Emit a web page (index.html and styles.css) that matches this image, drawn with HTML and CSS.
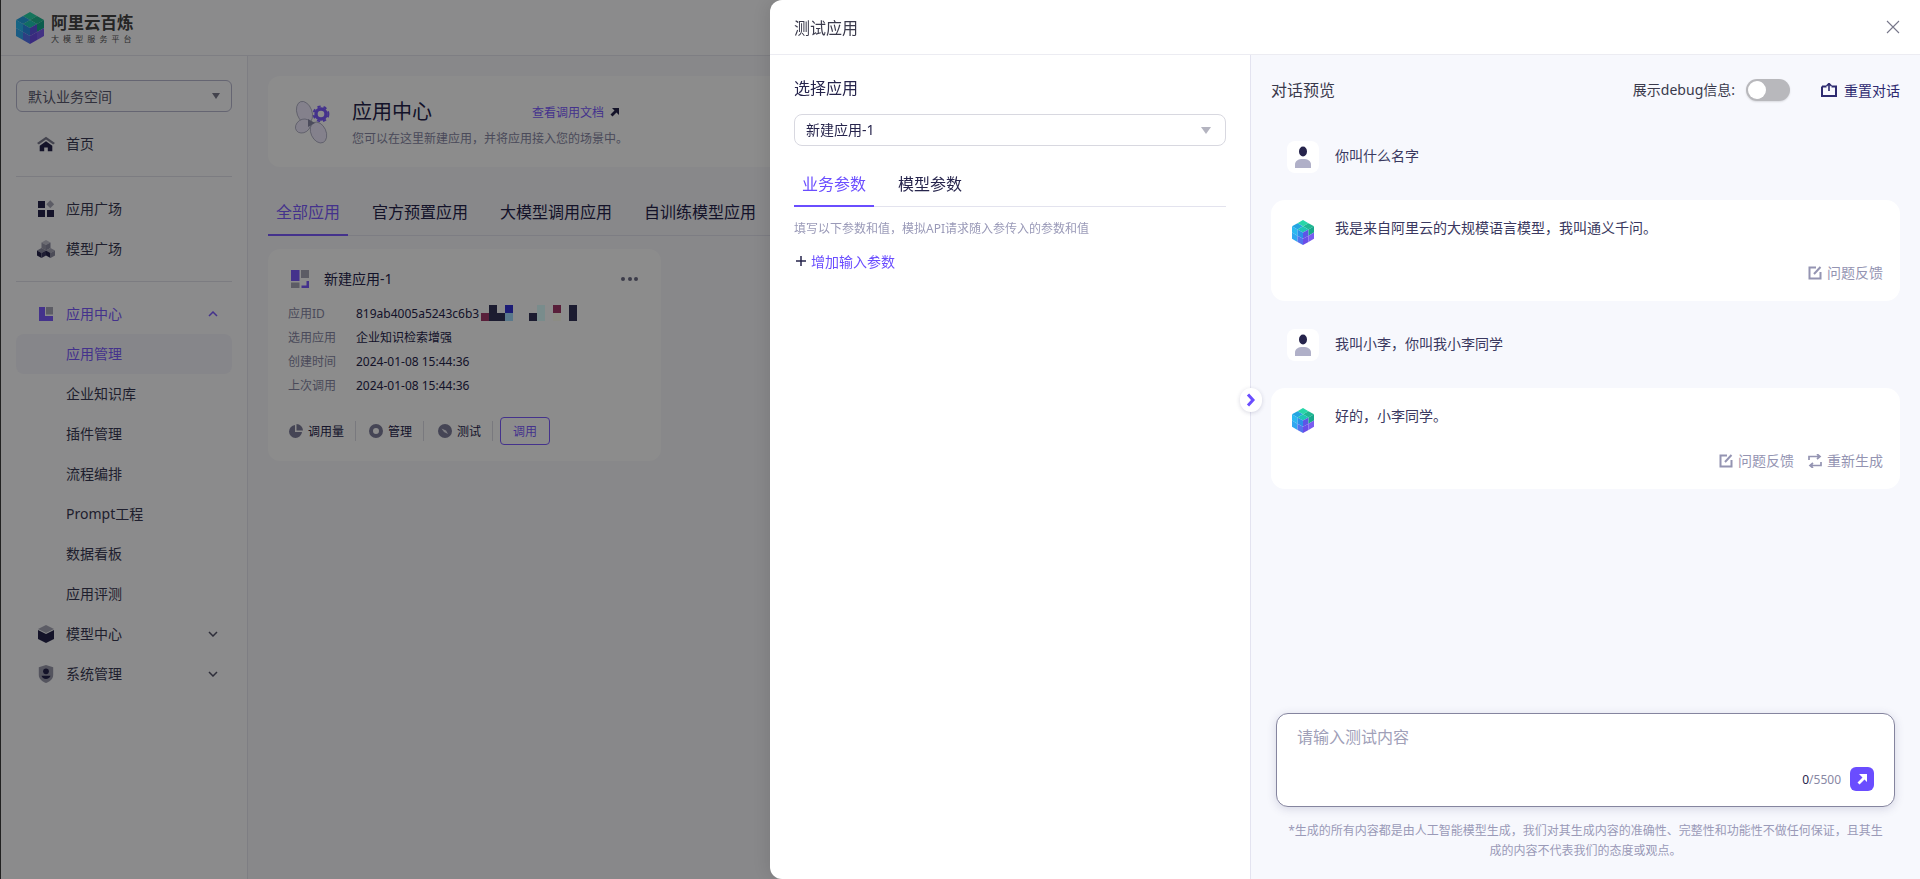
FILE: index.html
```html
<!DOCTYPE html>
<html lang="zh-CN">
<head>
<meta charset="utf-8">
<title>阿里云百炼</title>
<link rel="stylesheet" href="styles.css">
</head>
<body>
<svg class="defs" width="0" height="0" aria-hidden="true">
  <symbol id="cube" viewBox="0 0 28 32" preserveAspectRatio="none">
    <polygon points="14,0 21,4 14,8 7,4" fill="#27d6a8"/>
    <polygon points="21,4 28,8 21,12 14,8" fill="#1fb892"/>
    <polygon points="7,4 14,8 7,12 0,8" fill="#23a5e0"/>
    <polygon points="14,8 21,12 14,16 7,12" fill="#1ec6b4"/>
    <polygon points="0,8 7,12 7,20 0,16" fill="#2bb8f0"/>
    <polygon points="7,12 14,16 14,24 7,20" fill="#2a8fe8"/>
    <polygon points="14,16 21,12 21,20 14,24" fill="#5d55e6"/>
    <polygon points="21,12 28,8 28,16 21,20" fill="#17a88c"/>
    <polygon points="0,16 7,20 7,28 0,24" fill="#30a8f0"/>
    <polygon points="7,20 14,24 14,32 7,28" fill="#5273ee"/>
    <polygon points="14,24 21,20 21,28 14,32" fill="#6a4de8"/>
    <polygon points="21,20 28,16 28,24 21,28" fill="#7a5cf0"/>
  </symbol>
  <symbol id="person" viewBox="0 0 16 22">
    <ellipse cx="8" cy="5.5" rx="4" ry="5" fill="#26244c"/>
    <path d="M0 22v-3.5C0 15 3 13 8 13s8 2 8 5.500V22z" fill="#b0b0c8"/>
  </symbol>
  <symbol id="feedback" viewBox="0 0 14 14">
    <path d="M8 1.500H1.500v11h11V6" fill="none" stroke="currentColor" stroke-width="2"/>
    <path d="M6 8l6.500-7" fill="none" stroke="currentColor" stroke-width="2"/>
  </symbol>
  <symbol id="chev" viewBox="0 0 10 6">
    <path d="M1 5l4-4 4 4" fill="none" stroke="currentColor" stroke-width="1.500"/>
  </symbol>
</svg>

<div class="app">
  <header class="topbar">
    <svg class="brand-logo" width="28" height="32"><use href="#cube"/></svg>
    <div class="brand-text">
      <div class="brand-name">阿里云百炼</div>
      <div class="brand-sub">大模型服务平台</div>
    </div>
  </header>

  <div class="layout">
    <aside class="sidebar">
      <div class="workspace"><span>默认业务空间</span><i class="caret"></i></div>

      <div class="menu-item top-gap">
        <svg class="menu-icon" viewBox="0 0 20 16"><path d="M0 7L10 0l10 7-2 1.500L10 3 2 8.500z" fill="#7d7d90"/><path d="M10 5l7 5v6h-5v-4H8v4H3v-6z" fill="#26244c"/></svg>
        <span>首页</span>
      </div>
      <div class="menu-divider"></div>
      <div class="menu-item">
        <svg class="menu-icon" viewBox="0 0 18 18"><rect x="1" y="1" width="7" height="7" fill="#26244c"/><rect x="10.500" y="1.500" width="5.500" height="5.500" transform="rotate(45 13.250 4.250)" fill="#a8a8b8"/><rect x="1" y="10" width="7" height="7" fill="#26244c"/><rect x="10" y="10" width="7" height="7" fill="#26244c"/></svg>
        <span>应用广场</span>
      </div>
      <div class="menu-item">
        <svg class="menu-icon" viewBox="0 0 18 18"><polygon points="9,0 13.500,2.500 9,5 4.500,2.500" fill="#c4c4d0"/><polygon points="4.500,2.500 9,5 9,10.500 4.500,8" fill="#9a9aac"/><polygon points="13.500,2.500 9,5 9,10.500 13.500,8" fill="#8a8aa0"/><polygon points="4.500,8 9,10.500 4.500,13 0,10.500" fill="#8a8aa0"/><polygon points="0,10.500 4.500,13 4.500,18 0,15.500" fill="#26244c"/><polygon points="9,10.500 4.500,13 4.500,18 9,15.500" fill="#3a3860"/><polygon points="13.500,8 18,10.500 13.500,13 9,10.500" fill="#a8a8b8"/><polygon points="9,10.500 13.500,13 13.500,18 9,15.500" fill="#26244c"/><polygon points="18,10.500 13.500,13 13.500,18 18,15.500" fill="#8a8aa0"/></svg>
        <span>模型广场</span>
      </div>
      <div class="menu-divider"></div>
      <div class="menu-item is-current">
        <svg class="menu-icon" viewBox="0 0 18 18"><path d="M2 2h6v9h8v5H2z" fill="#7c5cff"/><rect x="9" y="2" width="7" height="7.500" fill="#a8a8b8"/></svg>
        <span>应用中心</span>
        <svg class="chev" width="10" height="6"><use href="#chev"/></svg>
      </div>
      <div class="menu-item sub is-active"><span>应用管理</span></div>
      <div class="menu-item sub"><span>企业知识库</span></div>
      <div class="menu-item sub"><span>插件管理</span></div>
      <div class="menu-item sub"><span>流程编排</span></div>
      <div class="menu-item sub"><span>Prompt工程</span></div>
      <div class="menu-item sub"><span>数据看板</span></div>
      <div class="menu-item sub"><span>应用评测</span></div>
      <div class="menu-item">
        <svg class="menu-icon" viewBox="0 0 18 18"><polygon points="9,0 17,4 9,8 1,4" fill="#a8a8b8"/><polygon points="1,5 9,9 17,5 17,14 9,18 1,14" fill="#26244c"/></svg>
        <span>模型中心</span>
        <svg class="chev down" width="10" height="6"><use href="#chev"/></svg>
      </div>
      <div class="menu-item">
        <svg class="menu-icon" viewBox="0 0 18 20"><path d="M9 0l8 2.500V11c0 4.500-4 7.500-8 9-4-1.500-8-4.500-8-9V2.500z" fill="#9a9aac"/><circle cx="9" cy="7" r="3.200" fill="#26244c"/><path d="M4 12h10c-.5 2-2.500 3.500-5 3.500S4.500 14 4 12z" fill="#26244c"/></svg>
        <span>系统管理</span>
        <svg class="chev down" width="10" height="6"><use href="#chev"/></svg>
      </div>
    </aside>

    <main class="main">
      <section class="hero">
        <svg class="hero-icon" width="38" height="46" viewBox="0 0 38 46">
          <g fill="#f0ecff" stroke="#8f8fa8" stroke-width=".6">
            <ellipse cx="10.500" cy="12.500" rx="7.500" ry="11.500" transform="rotate(-20 10.500 12.500)"/>
            <ellipse cx="9" cy="26" rx="6.500" ry="8" transform="rotate(55 9 26)"/>
            <ellipse cx="24.500" cy="32.500" rx="7.500" ry="11" transform="rotate(-25 24.500 32.500)"/>
          </g>
          <polygon points="14,19 21,23 14,27" fill="#8a8aa8"/>
          <circle cx="27" cy="14" r="5" fill="none" stroke="#7c5cff" stroke-width="3.400"/>
          <circle cx="27" cy="14" r="7.400" fill="none" stroke="#7c5cff" stroke-width="2" stroke-dasharray="3.300 2.900"/>
        </svg>
        <div class="hero-text">
          <div class="hero-title-row">
            <h1 class="hero-title">应用中心</h1>
            <a class="hero-link">查看调用文档</a>
            <svg class="hero-arrow" width="10" height="10" viewBox="0 0 10 10"><path d="M2 1h7v7L6.500 5.500 2.500 9.500 .5 7.500l4-4z" fill="#26244c"/></svg>
          </div>
          <p class="hero-sub">您可以在这里新建应用，并将应用接入您的场景中。</p>
        </div>
      </section>

      <nav class="tabs page-tabs">
        <div class="tab is-on">全部应用</div>
        <div class="tab">官方预置应用</div>
        <div class="tab">大模型调用应用</div>
        <div class="tab">自训练模型应用</div>
      </nav>

      <article class="app-card">
        <div class="card-head">
          <svg class="card-icon" width="18" height="18" viewBox="0 0 18 18"><rect width="8.500" height="11" fill="#7c5cff"/><rect x="10" width="8" height="8" fill="#a8a8b8"/><rect y="12.500" width="8.500" height="5.500" fill="#a8a8b8"/><path d="M15.500 11H18v7h-7.500v-2.500h5z" fill="#7c5cff"/></svg>
          <span class="card-name">新建应用-1</span>
          <span class="dots"><i></i><i></i><i></i></span>
        </div>
        <dl class="card-rows">
          <div class="card-row"><dt>应用ID</dt><dd class="masked">819ab4005a5243c6b3
            <svg class="mask" width="96" height="16" viewBox="0 0 96 16"><rect y="8" width="8" height="8" fill="#a33a6a"/><rect x="8" width="8" height="16" fill="#323258"/><rect x="16" y="8" width="8" height="8" fill="#323258"/><rect x="24" width="8" height="8" fill="#3434d8"/><rect x="24" y="8" width="8" height="8" fill="#a4dcff"/><rect x="48" y="8" width="8" height="8" fill="#323258"/><rect x="56" width="8" height="16" fill="#dcffff"/><rect x="72" width="8" height="8" fill="#a33a6a"/><rect x="72" y="8" width="8" height="8" fill="#fffff0"/><rect x="88" width="8" height="16" fill="#323258"/></svg>
          </dd></div>
          <div class="card-row"><dt>选用应用</dt><dd>企业知识检索增强</dd></div>
          <div class="card-row"><dt>创建时间</dt><dd>2024-01-08 15:44:36</dd></div>
          <div class="card-row"><dt>上次调用</dt><dd>2024-01-08 15:44:36</dd></div>
        </dl>
        <div class="card-actions">
          <span class="action">
            <svg width="14" height="14" viewBox="0 0 14 14"><path d="M6 1v7h7a6.500 6.500 0 1 1-7-7z" fill="#7e7e9c"/><path d="M7.500 0A6.500 6.500 0 0 1 14 6.500H7.500z" fill="#7e7e9c"/></svg>
            调用量</span>
          <i class="action-sep"></i>
          <span class="action">
            <svg width="14" height="14" viewBox="0 0 14 14"><circle cx="7" cy="7" r="5" fill="none" stroke="#7e7e9c" stroke-width="4"/></svg>
            管理</span>
          <i class="action-sep wide"></i>
          <span class="action">
            <svg width="14" height="14" viewBox="0 0 14 14"><circle cx="7" cy="7" r="7" fill="#7e7e9c"/><path d="M3.500 4.500L8 6.500 10 10 6 8z" fill="#e8e8f0"/></svg>
            测试</span>
          <i class="action-sep"></i>
          <button class="call-btn">调用</button>
        </div>
      </article>
    </main>
  </div>
</div>

<div class="mask-layer"></div>

<aside class="drawer">
  <header class="drawer-head">
    <span class="drawer-title">测试应用</span>
    <svg class="drawer-close" width="14" height="14" viewBox="0 0 14 14"><path d="M1 1l12 12M13 1L1 13" fill="none" stroke="#77778a" stroke-width="1.100"/></svg>
  </header>
  <div class="drawer-body">
    <section class="config">
      <div class="config-label">选择应用</div>
      <div class="select"><span>新建应用-1</span><i class="caret pale"></i></div>
      <nav class="tabs config-tabs">
        <div class="tab is-on">业务参数</div>
        <div class="tab">模型参数</div>
      </nav>
      <p class="hint">填写以下参数和值，模拟API请求随入参传入的参数和值</p>
      <div class="add-param">
        <svg width="10" height="10" viewBox="0 0 10 10"><path d="M5 0v10M0 5h10" stroke="#26244c" stroke-width="1.500"/></svg>
        <span>增加输入参数</span>
      </div>
    </section>

    <section class="chat">
      <div class="chat-top">
        <span class="chat-title">对话预览</span>
        <span class="debug-label">展示debug信息:</span>
        <span class="switch"><i></i></span>
        <span class="reset">
          <svg width="16" height="14" viewBox="0 0 16 14"><path d="M1 3.500h4.500M10.500 3.500H15V13H1V3.500" fill="none" stroke="#2d2a70" stroke-width="2"/><path d="M8 8V1M5.500 3L8 .5 10.500 3" fill="none" stroke="#2d2a70" stroke-width="1.600"/></svg>
          重置对话</span>
      </div>

      <div class="user-msg first">
        <span class="avatar"><svg width="16" height="22"><use href="#person"/></svg></span>
        <span class="user-text">你叫什么名字</span>
      </div>
      <div class="bot-msg">
        <div class="bot-line">
          <svg class="bot-logo" width="22" height="25"><use href="#cube"/></svg>
          <span>我是来自阿里云的大规模语言模型，我叫通义千问。</span>
        </div>
        <div class="bot-foot">
          <span class="bot-action"><svg width="14" height="14"><use href="#feedback"/></svg>问题反馈</span>
        </div>
      </div>
      <div class="user-msg">
        <span class="avatar"><svg width="16" height="22"><use href="#person"/></svg></span>
        <span class="user-text">我叫小李，你叫我小李同学</span>
      </div>
      <div class="bot-msg">
        <div class="bot-line">
          <svg class="bot-logo" width="22" height="25"><use href="#cube"/></svg>
          <span>好的，小李同学。</span>
        </div>
        <div class="bot-foot">
          <span class="bot-action"><svg width="14" height="14"><use href="#feedback"/></svg>问题反馈</span>
          <span class="bot-action"><svg width="14" height="14" viewBox="0 0 14 14"><path d="M1 6V2.500h10M9 0l3 2.500L9 5M13 8v3.500H3M5 14l-3-2.500L5 9" fill="none" stroke="currentColor" stroke-width="1.700"/></svg>重新生成</span>
        </div>
      </div>

      <div class="composer">
        <div class="placeholder">请输入测试内容</div>
        <div class="composer-foot">
          <span class="counter"><b>0</b>/5500</span>
          <span class="send"><svg width="12" height="12" viewBox="0 0 12 12"><path d="M3 1h8v8L8.500 6.500l-5 5-2-2 5-5z" fill="#fff"/></svg></span>
        </div>
      </div>
      <p class="disclaimer">*生成的所有内容都是由人工智能模型生成，我们对其生成内容的准确性、完整性和功能性不做任何保证，且其生成的内容不代表我们的态度或观点。</p>

      <span class="collapse"><svg width="10" height="14" viewBox="0 0 10 14"><path d="M2 1.500L7 7l-5 5.500" fill="none" stroke="#6a4dff" stroke-width="3"/></svg></span>
    </section>
  </div>
</aside>
</body>
</html>
```

FILE: styles.css
```css
* { box-sizing: border-box; }
html, body { margin: 0; height: 100%; overflow: hidden; }
body {
  font-family: "Noto Sans", "Noto Sans CJK SC", sans-serif;
  font-size: 14px;
  color: #26244c;
  background: #fff;
}
.defs { position: absolute; }
p, h1, dl, dd { margin: 0; }
i { font-style: normal; }

.app {
  height: 100vh;
  display: flex;
  flex-direction: column;
  background: #f8f8fc;
  border-left: 1px solid #3c3c3c;
}
.topbar {
  height: 56px;
  flex: none;
  display: flex;
  align-items: center;
  padding: 0 0 0 15px;
  background: #fdfdff;
  border-bottom: 1px solid #e6e6ee;
}
.brand-logo { flex: none; }
.brand-text { margin-left: 7px; }
.brand-name { font-size: 16.500px; line-height: 20px; font-weight: 700; color: #444; margin-top: 3px; }
.brand-sub { font-size: 8px; line-height: 12px; letter-spacing: 4.100px; color: #555; margin-top: 0; white-space: nowrap; }

.layout { flex: 1; display: flex; min-height: 0; }
.sidebar {
  width: 247px;
  flex: none;
  padding: 24px 15px 0;
  background: #fdfdff;
  border-right: 1px solid #e6e6ee;
}
.workspace {
  height: 32px;
  display: flex;
  align-items: center;
  justify-content: space-between;
  padding: 0 11px;
  border: 1px solid #b8b8d0;
  border-radius: 6px;
  color: #5a5a70;
}
.caret {
  width: 0; height: 0;
  border-left: 4.500px solid transparent;
  border-right: 4.500px solid transparent;
  border-top: 6px solid #7a7a8c;
}
.caret.pale { border-top-color: #b4b4c0; border-left-width: 5px; border-right-width: 5px; border-top-width: 7px; }

.menu-item {
  height: 40px;
  display: flex;
  align-items: center;
  padding-left: 21px;
  border-radius: 8px;
  color: #3a3a54;
}
.menu-item span { margin-bottom: 2px; }
.menu-item.top-gap { margin-top: 12px; }
.menu-icon { width: 18px; height: 18px; margin-right: 11px; flex: none; }
.menu-item.sub { padding-left: 50px; }
.menu-item.is-current { color: #7c5cff; }
.menu-item.is-active { color: #7c5cff; background: #f4f4fb; }
.menu-divider { height: 1px; margin: 12px 0; background: #e2e2ec; }
.chev { margin-left: auto; margin-right: 14px; color: #7c5cff; }
.chev.down { transform: rotate(180deg); color: #55556a; }

.main { flex: 1; min-width: 0; padding: 20px 20px 0; }
.hero {
  height: 91px;
  display: flex;
  align-items: flex-start;
  padding: 22px 0 0 26px;
  background: #fff;
  border-radius: 12px;
}
.hero-icon { flex: none; margin: 2px 20px 0 0; }
.hero-title-row { display: flex; align-items: center; height: 28px; }
.hero-title { font-size: 20px; line-height: 28px; font-weight: 400; width: 180px; }
.hero-link { font-size: 12px; color: #7c5cff; }
.hero-arrow { margin-left: 6px; }
.hero-sub { font-size: 12px; line-height: 20px; color: #8888a4; margin-top: 3px; }

.tabs { display: flex; border-bottom: 1px solid #e3e3ee; }
.tab {
  height: 47px;
  margin-bottom: -1px;
  padding: 0 8px;
  font-size: 16px;
  line-height: 47px;
  border-bottom: 2px solid transparent;
  white-space: nowrap;
}
.tab.is-on { color: #7c5cff; border-bottom-color: #7c5cff; }
.page-tabs { margin-top: 22px; gap: 16px; }
.config-tabs { margin-top: 14px; gap: 16px; }
.config-tabs .tab { line-height: 49px; }
.config-tabs .tab.is-on { color: #6a4dff; border-bottom-color: #6a4dff; }

.app-card {
  width: 393px;
  margin-top: 13px;
  padding: 21px 20px 16px;
  background: #fff;
  border-radius: 12px;
}
.card-head { display: flex; align-items: center; height: 18px; padding-left: 3px; }
.card-name { margin-left: 15px; margin-bottom: 2px; }
.dots { margin-left: auto; margin-right: 3px; display: flex; gap: 2.500px; }
.dots i { width: 4px; height: 4px; border-radius: 50%; background: #6e6e88; }
.card-rows { margin-top: 14px; font-size: 12px; line-height: 24px; }
.card-row { display: flex; }
.card-row dt { width: 68px; color: #8888a4; }
.card-row dd { position: relative; white-space: nowrap; }
.mask { position: absolute; left: 125px; top: 3px; }
.card-actions { display: flex; align-items: center; margin-top: 19px; height: 28px; font-size: 12px; }
.action { display: inline-flex; align-items: center; gap: 5px; padding-left: 1px; }
.action-sep { width: 1px; height: 20px; background: #dcdce6; margin: 0 12px 0 11px; }
.action-sep.wide { margin-right: 13px; }
.call-btn {
  width: 50px;
  height: 28px;
  margin-left: -5px;
  font: inherit;
  color: #7c5cff;
  background: transparent;
  border: 1px solid #7c5cff;
  border-radius: 4px;
  padding: 0;
}

.mask-layer { position: fixed; inset: 0; background: rgba(0, 0, 0, .45); }

.drawer {
  position: fixed;
  top: 0; bottom: 0; right: 0;
  width: 1150px;
  display: flex;
  flex-direction: column;
  background: #fff;
  border-radius: 12px 0 0 12px;
  box-shadow: -6px 0 16px rgba(0, 0, 0, .08);
  overflow: hidden;
}
.drawer-head {
  height: 55px;
  flex: none;
  display: flex;
  align-items: center;
  justify-content: space-between;
  padding: 0 20px 0 24px;
  border-bottom: 1px solid #ececf2;
}
.drawer-title { font-size: 16px; color: #3a3a4c; }
.drawer-body { flex: 1; display: flex; min-height: 0; }
.config {
  width: 481px;
  flex: none;
  padding: 21px 24px 0;
  border-right: 1px solid #e3e3f0;
}
.config-label { font-size: 16px; line-height: 24px; }
.select {
  height: 32px;
  margin-top: 14px;
  display: flex;
  align-items: center;
  justify-content: space-between;
  padding: 0 14px 0 11px;
  border: 1px solid #d8d8e0;
  border-radius: 8px;
}
.select span { margin-bottom: 2px; }
.hint { font-size: 12px; line-height: 20px; color: #9a9ab8; margin-top: 12px; }
.add-param { display: flex; align-items: center; height: 20px; margin-top: 12px; padding-left: 2px; color: #6a4dff; }
.add-param span { margin-left: 5px; }

.chat {
  flex: 1;
  min-width: 0;
  position: relative;
  display: flex;
  flex-direction: column;
  padding: 24px 20px 0;
  background: #f7f8fd;
  color: #3a3860;
}
.chat-top { display: flex; align-items: center; height: 22px; }
.chat-title { font-size: 16px; margin-right: auto; color: #3a3a4c; margin-bottom: 2px; }
.debug-label { margin-right: 11px; color: #3a3a4c; margin-bottom: 2px; }
.switch { width: 44px; height: 22px; border-radius: 11px; background: #b8b8bc; padding: 2px; box-shadow: 0 1px 2px rgba(0,0,0,.12); }
.switch i { display: block; width: 18px; height: 18px; border-radius: 50%; background: #fff; }
.reset { display: inline-flex; align-items: center; gap: 7px; margin-left: 31px; color: #2d2a70; }

.user-msg { display: flex; align-items: center; margin-top: 28px; padding-left: 16px; gap: 16px; height: 32px; }
.user-msg.first { margin-top: 40px; }
.user-text { margin-bottom: 4px; }
.avatar {
  width: 32px; height: 32px;
  display: flex; align-items: center; justify-content: center;
  background: #fff;
  border-radius: 8px;
}
.avatar svg { width: 16px; height: 22px; }
.bot-msg {
  height: 101px;
  margin-top: 27px;
  padding: 16px 17px 0 20px;
  display: flex;
  flex-direction: column;
  background: #fff;
  border-radius: 14px;
}
.bot-line { display: flex; align-items: flex-start; line-height: 24px; }
.bot-logo { flex: none; margin: 4px 21px 0 1px; }
.bot-foot { margin-top: auto; margin-bottom: 16px; display: flex; justify-content: flex-end; gap: 14px; color: #9494b2; line-height: 24px; }
.bot-action { display: inline-flex; align-items: center; gap: 5px; }

.composer {
  height: 94px;
  margin: auto 5px 14px;
  padding: 11px 20px 12px;
  display: flex;
  flex-direction: column;
  justify-content: space-between;
  background: #fff;
  border: 1px solid #85859f;
  border-radius: 12px;
  box-shadow: 0 2px 10px rgba(60, 60, 110, .18);
}
.placeholder { font-size: 16px; line-height: 24px; color: #a0a0b8; }
.composer-foot { display: flex; align-items: center; justify-content: flex-end; gap: 9px; margin-bottom: 3px; }
.counter { font-size: 12px; color: #8888a4; }
.counter b { font-weight: 400; color: #26244c; }
.send {
  width: 24px; height: 24px;
  display: flex; align-items: center; justify-content: center;
  background: #6a4dff;
  border-radius: 6px;
}
.disclaimer { font-size: 12px; line-height: 20px; color: #9a9ab8; text-align: center; padding: 0 16px; margin-bottom: 18px; }
.collapse {
  position: absolute;
  left: -11px;
  top: 333px;
  width: 22px;
  height: 24px;
  display: flex; align-items: center; justify-content: center;
  background: #fff;
  border-radius: 12px;
  box-shadow: 0 1px 4px rgba(40, 40, 90, .18);
}
```
